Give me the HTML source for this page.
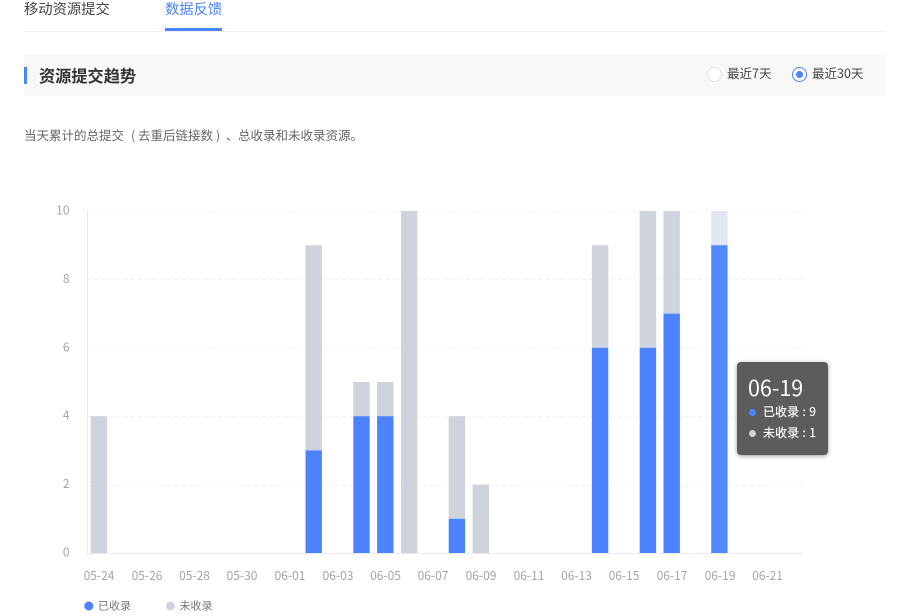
<!DOCTYPE html>
<html lang="zh-CN">
<head>
<meta charset="utf-8">
<title>数据反馈</title>
<style>
html,body{margin:0;padding:0;background:#fff;}
body{width:910px;height:616px;position:relative;overflow:hidden;font-family:"Noto Sans CJK SC","Liberation Sans",sans-serif;color:#333;text-spacing-trim:space-all;}
.a{position:absolute;white-space:nowrap;}
svg text{font-family:"Noto Sans CJK SC","Liberation Sans",sans-serif;}
.soft{filter:blur(.3px);}
.d{position:absolute;top:126px;font-size:12.5px;line-height:18px;color:#666;white-space:nowrap;}
.t{font-size:12px;line-height:17px;color:#fff;word-spacing:.6px;letter-spacing:.05px;-webkit-text-stroke:.15px #fff;}
</style>
</head>
<body>
<div class="a" style="left:24px;top:0;font-size:14.3px;line-height:18px;color:#444;">移动资源提交</div>
<div class="a" style="left:165px;top:0;font-size:14.3px;line-height:18px;color:#4f83f7;">数据反馈</div>
<div class="a" style="left:24px;top:31px;width:861px;height:1px;background:#f0f0f0;"></div>
<div class="a" style="left:165px;top:28px;width:57px;height:3px;background:#4a85ff;"></div>

<div class="a" style="left:24px;top:55px;width:861px;height:41px;background:#f8f8f8;"></div>
<div class="a" style="left:24px;top:67px;width:3px;height:17px;background:#4a85ff;"></div>
<div class="a" style="left:39px;top:65px;font-size:16.2px;line-height:20px;font-weight:bold;color:#333;">资源提交趋势</div>

<div class="a" style="left:707px;top:67px;width:13px;height:13px;border:1px solid #e4e4e4;border-radius:50%;background:#fff;"></div>
<div class="a" style="left:727px;top:64px;font-size:12.5px;line-height:18px;color:#444;">最近7天</div>
<div class="a" style="left:792px;top:67px;width:13px;height:13px;border:1px solid #4a85ff;border-radius:50%;background:#fff;"></div>
<div class="a" style="left:796px;top:71px;width:7px;height:7px;border-radius:50%;background:#4a85ff;"></div>
<div class="a" style="left:812px;top:64px;font-size:12.5px;line-height:18px;color:#444;">最近30天</div>

<div class="d" style="left:24px;">当天累计的总提交</div>
<div class="d" style="left:131px;">(</div>
<div class="d" style="left:138px;">去重后链接数</div>
<div class="d" style="left:216px;">)</div>
<div class="d" style="left:226px;">、</div>
<div class="d" style="left:238px;">总收录和未收录资源。</div>

<svg class="a" style="left:0;top:0;" width="910" height="616" viewBox="0 0 910 616">
  <g stroke="#f1f2f4" stroke-width="1" stroke-dasharray="4 3.28">
    <line x1="87" x2="803" y1="211.5" y2="211.5"/>
    <line x1="87" x2="803" y1="279.5" y2="279.5"/>
    <line x1="87" x2="803" y1="348.5" y2="348.5"/>
    <line x1="87" x2="803" y1="416.5" y2="416.5"/>
    <line x1="87" x2="803" y1="485.5" y2="485.5"/>
  </g>
  <line x1="87.5" x2="87.5" y1="211" y2="553" stroke="#e8eaee"/>
  <line x1="87" x2="803" y1="553.5" y2="553.5" stroke="#e8eaee"/>

  <g fill="#cfd3dc">
    <rect x="90.7" y="416.2" width="16.4" height="136.8"/>
    <rect x="305.5" y="245.2" width="16.4" height="205.2"/>
    <rect x="353.3" y="382" width="16.4" height="34.2"/>
    <rect x="377.1" y="382" width="16.4" height="34.2"/>
    <rect x="401" y="211" width="16.4" height="342"/>
    <rect x="448.7" y="416.2" width="16.4" height="102.6"/>
    <rect x="472.6" y="484.6" width="16.4" height="68.4"/>
    <rect x="591.9" y="245.2" width="16.4" height="102.6"/>
    <rect x="639.7" y="211" width="16.4" height="136.8"/>
    <rect x="663.5" y="211" width="16.4" height="102.6"/>
    <rect x="711.2" y="211" width="16.4" height="34.2" fill="#e2e6f1"/>
  </g>
  <g fill="#4d82ff">
    <rect x="305.5" y="450.4" width="16.4" height="102.6"/>
    <rect x="353.3" y="416.2" width="16.4" height="136.8"/>
    <rect x="377.1" y="416.2" width="16.4" height="136.8"/>
    <rect x="448.7" y="518.8" width="16.4" height="34.2"/>
    <rect x="591.9" y="347.8" width="16.4" height="205.2"/>
    <rect x="639.7" y="347.8" width="16.4" height="205.2"/>
    <rect x="663.5" y="313.6" width="16.4" height="239.4"/>
    <rect x="711.2" y="245.2" width="16.4" height="307.8" fill="#5189ff"/>
  </g>

  <g class="soft" font-size="12" fill="#a4a4a4" text-anchor="end">
    <text x="69.5" y="214.5">10</text>
    <text x="69.5" y="283">8</text>
    <text x="69.5" y="351.5">6</text>
    <text x="69.5" y="419.5">4</text>
    <text x="69.5" y="488">2</text>
    <text x="69.5" y="556.5">0</text>
  </g>
  <g class="soft" font-size="12" fill="#a4a4a4" text-anchor="middle">
    <text x="99" y="580">05-24</text>
    <text x="147" y="580">05-26</text>
    <text x="194.5" y="580">05-28</text>
    <text x="242" y="580">05-30</text>
    <text x="290" y="580">06-01</text>
    <text x="338" y="580">06-03</text>
    <text x="385.5" y="580">06-05</text>
    <text x="433" y="580">06-07</text>
    <text x="481" y="580">06-09</text>
    <text x="529" y="580">06-11</text>
    <text x="576.5" y="580">06-13</text>
    <text x="624" y="580">06-15</text>
    <text x="672" y="580">06-17</text>
    <text x="720" y="580">06-19</text>
    <text x="767.5" y="580">06-21</text>
  </g>
  <circle cx="88.8" cy="606" r="4.5" fill="#4d82ff"/>
  <text class="soft" x="98" y="609.5" font-size="11" fill="#777">已收录</text>
  <circle cx="170.5" cy="606" r="4.5" fill="#cfd3dc"/>
  <text class="soft" x="179.5" y="609.5" font-size="11" fill="#777">未收录</text>
</svg>

<div class="a" style="left:737px;top:362px;width:91px;height:93px;background:#5c5c5c;border-radius:4px;box-shadow:0 1px 4px rgba(0,0,0,.4);"></div>
<div class="a" style="left:748px;top:376px;font-size:21.5px;line-height:24px;color:#fff;">06-19</div>
<div class="a" style="left:749px;top:409px;width:7px;height:7px;border-radius:50%;background:#4d82ff;"></div>
<div class="a t" style="left:763px;top:403px;">已收录 : 9</div>
<div class="a" style="left:749px;top:430px;width:7px;height:7px;border-radius:50%;background:#cfd3dc;"></div>
<div class="a t" style="left:763px;top:424px;">未收录 : 1</div>
</body>
</html>
